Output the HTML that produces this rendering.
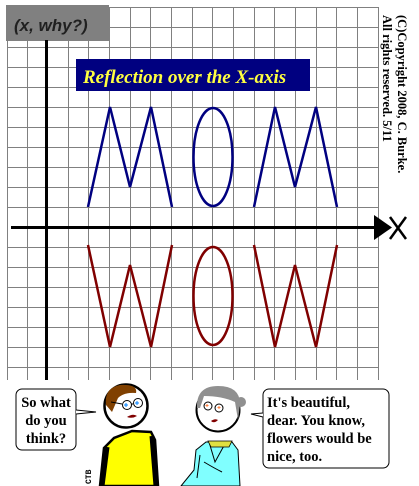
<!DOCTYPE html>
<html><head><meta charset="utf-8"><style>
html,body{margin:0;padding:0;background:#fff;width:419px;height:486px;overflow:hidden}
svg{display:block}
</style></head><body>
<svg width="419" height="486" viewBox="0 0 419 486" xmlns="http://www.w3.org/2000/svg">
<g stroke="#808080" stroke-width="1" fill="none" shape-rendering="crispEdges">
<path d="M7.5 7V380M27.5 7V380M68.5 7V380M88.5 7V380M109.5 7V380M130.5 7V380M150.5 7V380M171.5 7V380M192.5 7V380M212.5 7V380M233.5 7V380M254.5 7V380M274.5 7V380M295.5 7V380M316.5 7V380M336.5 7V380M357.5 7V380M378.5 7V380"/>
<path d="M7 7.5H378M7 27.5H378M7 47.5H378M7 67.5H378M7 87.5H378M7 107.5H378M7 127.5H378M7 147.5H378M7 167.5H378M7 187.5H378M7 207.5H378M7 247.5H378M7 267.5H378M7 287.5H378M7 307.5H378M7 327.5H378M7 347.5H378M7 367.5H378"/>
</g>
<rect x="6" y="5" width="103" height="36" fill="#808080"/>
<text x="14" y="31" font-family="Liberation Sans,sans-serif" font-size="17" font-weight="bold" font-style="italic" fill="#202020">(x, why?)</text>
<rect x="45" y="40" width="3" height="340" fill="#000"/>
<rect x="11" y="226" width="368" height="3" fill="#000"/>
<polygon points="374,215 392,227.5 374,240" fill="#000"/>
<path d="M390 217L406 239M406 217L390 239" stroke="#000" stroke-width="2.5" fill="none"/>
<rect x="76" y="59" width="234" height="32" fill="#000080"/>
<text x="83" y="83" font-family="Liberation Serif,serif" font-size="19" font-style="italic" font-weight="bold" fill="#ffff40">Reflection over the X-axis</text>
<g stroke="#000080" stroke-width="2.5" fill="none">
<polyline points="88,207 110,107 130,187 151,107 172,207"/>
<ellipse cx="213" cy="157" rx="19.5" ry="49"/>
<polyline points="254,207 275,107 295,187 316,107 337,207"/>
</g>
<g stroke="#800000" stroke-width="2.5" fill="none">
<polyline points="88,245 110,347 130,265 151,347 172,245"/>
<ellipse cx="213" cy="296" rx="19.5" ry="49"/>
<polyline points="254,245 275,347 295,265 316,347 337,245"/>
</g>
<g font-family="Liberation Serif,serif" font-weight="bold" font-size="12.5" fill="#000">
<text transform="translate(398,15) rotate(90)">(C)Copyright 2008, C. Burke.</text>
<text transform="translate(383,15) rotate(90)">All rights reserved. 5/11</text>
</g>
<rect x="16" y="389" width="60" height="61" rx="6" fill="#fff" stroke="#000" stroke-width="1"/>
<path d="M76 410L96 412L76 414" fill="#fff" stroke="#000" stroke-width="1"/>
<g font-family="Liberation Serif,serif" font-weight="bold" font-size="14.5" fill="#000" text-anchor="middle">
<text x="46" y="407">So what</text><text x="46" y="425">do you</text><text x="46" y="443">think?</text>
</g>
<rect x="263" y="389" width="126" height="79" rx="6" fill="#fff" stroke="#000" stroke-width="1"/>
<path d="M263 413L251 414L263 417" fill="#fff" stroke="#000" stroke-width="1"/>
<g font-family="Liberation Serif,serif" font-weight="bold" font-size="14.5" fill="#000">
<text x="267" y="407">It's beautiful,</text><text x="267" y="425">dear. You know,</text><text x="267" y="443">flowers would be</text><text x="267" y="461">nice, too.</text>
</g>
<!-- man -->
<path d="M104 448L114 438L132 431L151 432L155 440L158 486L100 486Z" fill="#ffff00" stroke="#000" stroke-width="2.5"/>
<path d="M107 447L102 486" stroke="#000" stroke-width="5"/>
<path d="M152 436L156 486" stroke="#000" stroke-width="5"/>
<circle cx="126" cy="406" r="21.5" fill="#fff" stroke="#000" stroke-width="2.5"/>
<path d="M106 405Q104 388 120 385Q138 384 136 393Q124 392 118 398L112 412Z" fill="#804000"/>
<circle cx="127" cy="405" r="4.5" fill="#fff" stroke="#000" stroke-width="1"/>
<circle cx="138" cy="403" r="4.5" fill="#fff" stroke="#000" stroke-width="1"/>
<path d="M111 402L122 404M131 404L133 404" stroke="#000" stroke-width="1"/>
<path d="M126 403v4M124 405h4M137 401v4M135 403h4" stroke="#0080ff" stroke-width="1"/>
<path d="M127 417Q133 413 137 416Q132 419 127 417Z" fill="#800000"/>
<text transform="translate(91,484) rotate(-90)" font-family="Liberation Mono,monospace" font-size="8" font-weight="bold">CTB</text>
<!-- woman -->
<path d="M181 486L194 470L196 450L206 442L232 442L238 450L240 486Z" fill="#80ffff" stroke="#000" stroke-width="1"/>
<path d="M209 442L215 462L226 442M204 462Q214 468 222 472M200 455L197 478" stroke="#000" stroke-width="1" fill="none"/>
<circle cx="218" cy="410" r="21.5" fill="#fff" stroke="#000" stroke-width="2"/>
<path d="M197 408Q196 386 218 386Q240 386 240 404L238 420L235 402Q222 396 204 396L200 408Z" fill="#909090"/>
<circle cx="241" cy="402" r="5" fill="#909090"/>
<path d="M208 441L232 441L229 447L211 447Z" fill="#e0e040" stroke="#000" stroke-width="0.8"/>
<circle cx="208" cy="406" r="4" fill="#fff" stroke="#000" stroke-width="1"/>
<circle cx="219" cy="408" r="4" fill="#fff" stroke="#000" stroke-width="1"/>
<path d="M207 404v3M205.5 405.5h3M219 406v3M217.5 407.5h3" stroke="#ff8040" stroke-width="1"/>
<path d="M211 421Q215 418 218 420Q214 424 211 421Z" fill="#800000"/>
</svg>
</body></html>
